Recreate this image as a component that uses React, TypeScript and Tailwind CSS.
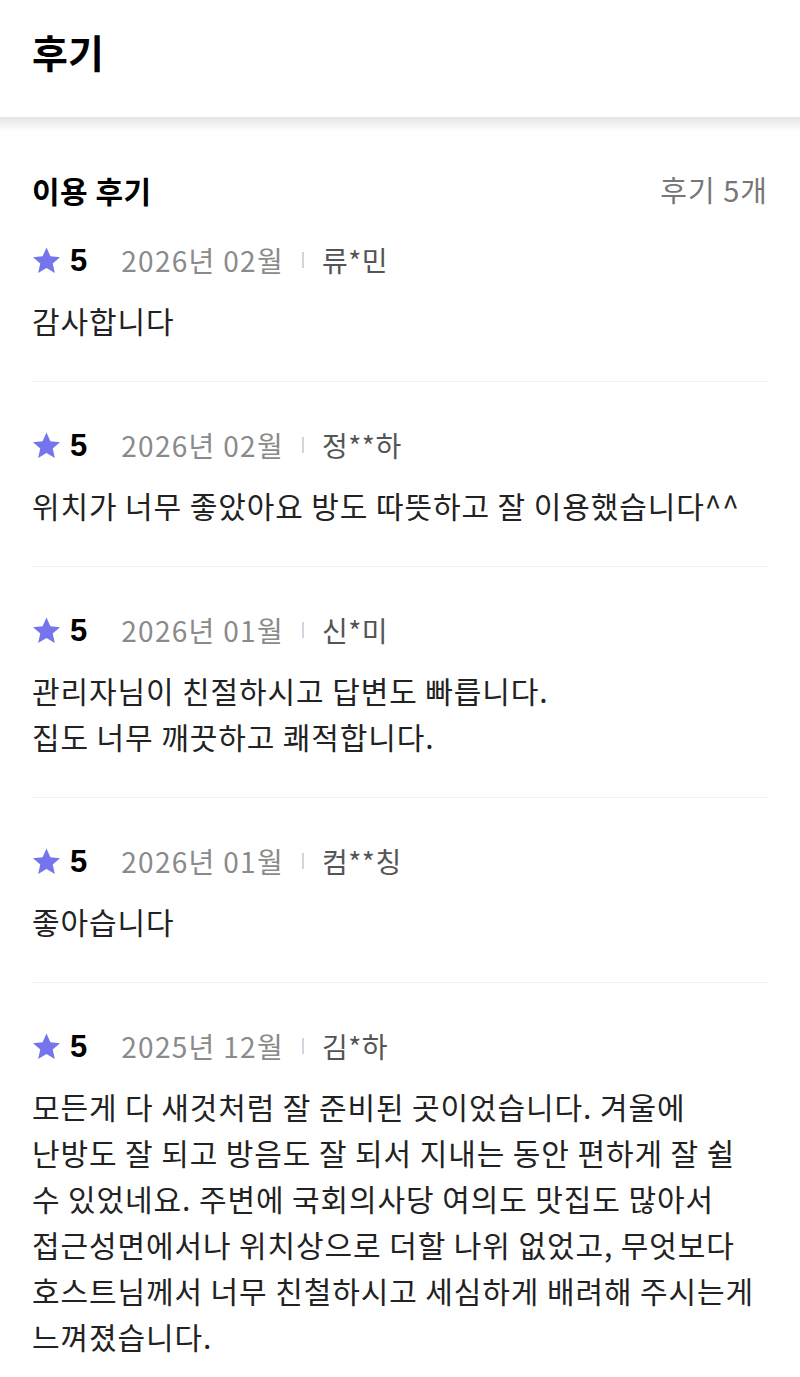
import React from "react";

type Review = {
  rating: number;
  date: string;
  name: string;
  lines: string[];
};

const reviews: Review[] = [
  { rating: 5, date: "2026년 02월", name: "류*민", lines: ["감사합니다"] },
  {
    rating: 5,
    date: "2026년 02월",
    name: "정**하",
    lines: ["위치가 너무 좋았아요 방도 따뜻하고 잘 이용했습니다^^"],
  },
  {
    rating: 5,
    date: "2026년 01월",
    name: "신*미",
    lines: ["관리자님이 친절하시고 답변도 빠릅니다.", "집도 너무 깨끗하고 쾌적합니다."],
  },
  { rating: 5, date: "2026년 01월", name: "컴**칭", lines: ["좋아습니다"] },
  {
    rating: 5,
    date: "2025년 12월",
    name: "김*하",
    lines: [
      "모든게 다 새것처럼 잘 준비된 곳이었습니다. 겨울에",
      "난방도 잘 되고 방음도 잘 되서 지내는 동안 편하게 잘 쉴",
      "수 있었네요. 주변에 국회의사당 여의도 맛집도 많아서",
      "접근성면에서나 위치상으로 더할 나위 없었고, 무엇보다",
      "호스트님께서 너무 친철하시고 세심하게 배려해 주시는게",
      "느껴졌습니다.",
    ],
  },
];

function Star() {
  return (
    <svg viewBox="2 2 20 19" className="w-[27px] h-[26px] ml-[1px]" fill="#7474ec">
      <path d="M12 2.2l2.9 6.6 7.1.6-5.4 4.7 1.6 7-6.2-3.7-6.2 3.7 1.6-7L2 9.4l7.1-.6z" />
    </svg>
  );
}

export default function App() {
  return (
    <div
      className="min-h-[1377px] bg-white text-[#222]"
      style={{ fontFamily: '"Noto Sans CJK KR", "Noto Sans", sans-serif' }}
    >
      {/* 상단 헤더 */}
      <header className="h-[117px] flex items-center px-[32px]">
        <h1 className="text-[39px] font-bold text-black leading-none -mt-[14px]">후기</h1>
      </header>
      <div className="h-[14px] bg-gradient-to-b from-[#e4e4e4] to-white" />

      <main className="px-[32px]">
        <div className="flex items-center justify-between h-[40px] mt-[39px]">
          <h2 className="text-[30px] font-semibold text-black tracking-[0.5px]">이용 후기</h2>
          <span className="text-[29px] text-[#777] tracking-[1px]">후기 5개</span>
        </div>

        <ul className="mt-[-13px]">
          {reviews.map((r, i) => (
            <li
              key={i}
              className={`pt-[44px] pb-[38px] ${i < reviews.length - 1 ? "border-b border-[#f0f0f0]" : ""}`}
            >
              <div className="flex items-center h-[38px]">
                <Star />
                <span
                  className="ml-[10px] text-[31px] font-bold text-black leading-none"
                  style={{ fontFamily: '"Liberation Sans", sans-serif' }}
                >
                  {r.rating}
                </span>
                <span className="ml-[34px] text-[28px] text-[#8a8a8a] tracking-[1.3px]">{r.date}</span>
                <span className="mx-[18px] w-[2px] h-[16px] bg-[#d4d4de]" />
                <span className="text-[28px] text-[#555] tracking-[0.5px]">{r.name}</span>
              </div>
              <div className="mt-[18px] text-[30px] leading-[46px] tracking-[0.9px] text-[#222]">
                {r.lines.map((l, j) => (
                  <p key={j} className="whitespace-nowrap">{l}</p>
                ))}
              </div>
            </li>
          ))}
        </ul>
      </main>
    </div>
  );
}
